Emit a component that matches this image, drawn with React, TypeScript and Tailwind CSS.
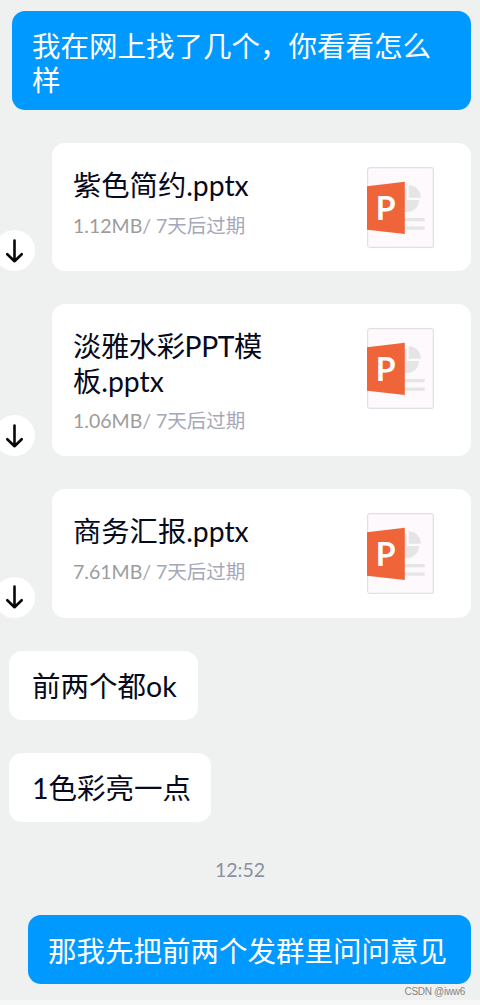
import type { ReactNode } from 'react';

interface FileMessage {
  lines: string[];
  size: string;
  expires: string;
}

const FILES: FileMessage[] = [
  { lines: ['紫色简约.pptx'], size: '1.12MB', expires: '7天后过期' },
  { lines: ['淡雅水彩PPT模', '板.pptx'], size: '1.06MB', expires: '7天后过期' },
  { lines: ['商务汇报.pptx'], size: '7.61MB', expires: '7天后过期' },
];

/** PowerPoint document thumbnail */
function PptIcon() {
  return (
    <svg width="67" height="81" viewBox="0 0 67 81" className="shrink-0">
      <rect x="0.6" y="0.6" width="65.8" height="79.8" rx="2.5" fill="#fdf9fd" stroke="#e2e0e3" strokeWidth="1.2" />
      <path d="M40 33V21A12 12 0 1 0 52 33Z" fill="#e5e5e6" />
      <path d="M41.7 30.7V18.3A12.2 12.2 0 0 1 53.9 30.7Z" fill="#e5e5e6" />
      <path d="M37 51H57.7V54.3H37ZM37 59.6H57.7V62.8H37Z" fill="#e5e5e6" />
      <path d="M0 19.2L37.8 14.7V67L0 62.7Z" fill="#ef6539" />
      <text x="8.8" y="52.7" fontSize="32" fontWeight="700" fill="#fff" className="font-['Lato',sans-serif]">
        P
      </text>
    </svg>
  );
}

function DownloadButton() {
  return (
    <button type="button" className="-ml-1.5 flex size-[41px] shrink-0 items-center justify-center rounded-full bg-white">
      <svg width="19" height="26" viewBox="0 0 19 26" fill="none" stroke="#08080a" strokeWidth="2.6" strokeLinecap="round" strokeLinejoin="round">
        <path d="M9.5 2.5V23.2M2.3 16.2L9.5 23.2L16.7 16.2" />
      </svg>
    </button>
  );
}

function FileCard({ file }: { file: FileMessage }) {
  const wrapped = file.lines.length > 1;

  return (
    <div className="flex items-end pr-[9px]">
      <DownloadButton />
      <div
        className={`ml-[17px] flex flex-1 items-start justify-between rounded-[13px] bg-white pt-6 pr-[37px] pl-[21px] ${
          wrapped ? 'h-[152px]' : 'h-[128.25px]'
        }`}
      >
        <div className="whitespace-nowrap">
          <p className="pt-px text-[28.3px] leading-[34.5px] text-[#050a1c]">
            {file.lines.map((line, index) => (
              <span key={line} className={wrapped && index === 0 ? 'block tracking-[-0.4px]' : 'block'}>
                {line}
              </span>
            ))}
          </p>
          <p className="mt-2 text-[19.5px] leading-[30px] text-[#a4a8b8]">
            <span className="text-[#9c9c9e]">{file.size}</span>/ {file.expires}
          </p>
        </div>
        <PptIcon />
      </div>
    </div>
  );
}

function ReceivedBubble({ width, children }: { width: string; children: ReactNode }) {
  return (
    <div
      className={`ml-[9px] h-[69px] rounded-[13px] bg-white pl-[23px] text-[28.5px] leading-[71px] whitespace-nowrap text-[#050a1c] ${width}`}
    >
      {children}
    </div>
  );
}

export default function App() {
  return (
    <div className="h-[1005px] w-[480px] overflow-hidden bg-[#f7f7f7] font-['Lato','Noto_Sans_CJK_SC',sans-serif]">
      <main className="flex h-[1000px] flex-col bg-[#eff0f0] pt-[11px]">
        <div className="mr-[9px] ml-3 h-[99px] shrink-0 rounded-[13px] bg-[#0099ff] pt-[19px] pl-5 text-[28.5px] leading-[33.5px] text-white">
          <p>我在网上找了几个，你看看怎么</p>
          <p>样</p>
        </div>

        <div className="mt-[33px] flex h-[678px] shrink-0 flex-col gap-[33px]">
          {FILES.map((file) => (
            <FileCard key={file.lines[0]} file={file} />
          ))}
          <ReceivedBubble width="w-[189px]">前两个都ok</ReceivedBubble>
          <ReceivedBubble width="w-[202px]">1色彩亮一点</ReceivedBubble>
        </div>

        <p className="mt-[34px] shrink-0 text-center text-[19.5px] leading-[30px] text-[#8b90a0]">12:52</p>

        <div className="mt-[30px] mr-[9px] ml-[28px] h-[69px] shrink-0 rounded-[13px] bg-[#0099ff] pl-5 text-[28.5px] leading-[72px] whitespace-nowrap text-white">
          那我先把前两个发群里问问意见
        </div>
        <p className="mr-[15px] text-right font-['Liberation_Sans',sans-serif] text-[10px] leading-4 tracking-[-0.3px] text-[#858585]">
          CSDN @iww6
        </p>
      </main>
    </div>
  );
}
